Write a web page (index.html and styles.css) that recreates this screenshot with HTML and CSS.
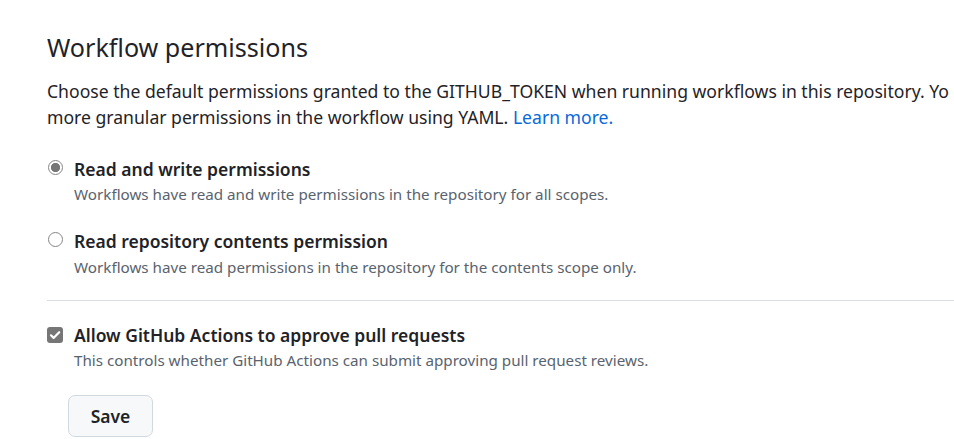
FILE: index.html
```html
<!DOCTYPE html>
<html lang="en">
<head>
<meta charset="utf-8">
<title>Workflow permissions</title>
<link rel="stylesheet" href="styles.css">
</head>
<body>
<div class="page">
  <h2 class="heading">Workflow permissions</h2>
  <p class="intro">Choose the default permissions granted to the GITHUB_TOKEN when running workflows in this repository. Yo<br>more granular permissions in the workflow using YAML. <a class="link" href="#">Learn more.</a></p>

  <div class="options">
    <label class="option">
      <span class="control"><input type="radio" class="radio" name="perm" checked></span>
      <span class="text">
        <span class="label">Read and write permissions</span>
        <span class="desc">Workflows have read and write permissions in the repository for all scopes.</span>
      </span>
    </label>
    <label class="option option-next">
      <span class="control"><input type="radio" class="radio" name="perm"></span>
      <span class="text">
        <span class="label">Read repository contents permission</span>
        <span class="desc">Workflows have read permissions in the repository for the contents scope only.</span>
      </span>
    </label>
  </div>

  <hr class="divider">

  <label class="option">
    <span class="control control-check">
      <span class="checkbox">
        <svg viewBox="0 0 16 16" width="16" height="16" aria-hidden="true"><path d="M4 8.3l2.6 2.6L12.2 5.2" fill="none" stroke="#fff" stroke-width="2.2" stroke-linecap="round" stroke-linejoin="round"/></svg>
      </span>
    </span>
    <span class="text">
      <span class="label">Allow GitHub Actions to approve pull requests</span>
      <span class="desc">This controls whether GitHub Actions can submit approving pull request reviews.</span>
    </span>
  </label>

  <button class="btn" type="button">Save</button>
</div>
</body>
</html>
```
FILE: styles.css
```css
html, body {
  margin: 0;
  padding: 0;
  background: #ffffff;
  overflow: hidden;
}

body {
  font-family: "Noto Sans", "Open Sans", sans-serif;
  color: #1f2328;
}

.page {
  padding: 29px 0 0 47px;
}

.heading {
  margin: 0;
  font-size: 25.1px;
  line-height: 36px;
  font-weight: 400;
  color: #1f2328;
}

.intro {
  margin: 13px 0 0;
  font-size: 17.6px;
  line-height: 26.25px;
  white-space: nowrap;
}

.link {
  color: #0969da;
  text-decoration: none;
}

.options {
  margin-top: 25px;
}

.option {
  display: flex;
  align-items: flex-start;
}

.option-next {
  margin-top: 23px;
}

.control {
  width: 27px;
  flex: none;
  display: flex;
  padding-top: 4px;
}

.control-check {
  padding-top: 5px;
}

.radio {
  appearance: none;
  -webkit-appearance: none;
  margin: 0 0 0 1px;
  width: 15px;
  height: 15px;
  box-sizing: border-box;
  border: 1.5px solid #868686;
  border-radius: 50%;
  background: #fff;
}

.radio:checked {
  background: radial-gradient(circle, #777 0 4.3px, #fff 4.9px);
}

.checkbox {
  width: 16px;
  height: 16px;
  border-radius: 3px;
  background: #767676;
  display: flex;
}

.text {
  display: flex;
  flex-direction: column;
}

.label {
  font-size: 17.5px;
  line-height: 26.25px;
  font-weight: 600;
  color: #1f2328;
}

.desc {
  margin-top: 1px;
  font-size: 15.2px;
  line-height: 22.5px;
  color: #59636e;
}

.label-wide {
  letter-spacing: 0.1px;
}

.divider {
  margin: 22px 0 21px;
  border: 0;
  border-top: 1px solid #d8dee4;
  height: 0;
}

.btn {
  display: block;
  margin: 23px 0 0 21px;
  width: 85px;
  height: 42px;
  box-sizing: border-box;
  padding: 0;
  border: 1px solid #d1d9e0;
  border-radius: 7px;
  background: #f6f8fa;
  font-family: inherit;
  font-size: 17.5px;
  font-weight: 600;
  line-height: 40px;
  color: #1f2328;
  text-align: center;
}
```
